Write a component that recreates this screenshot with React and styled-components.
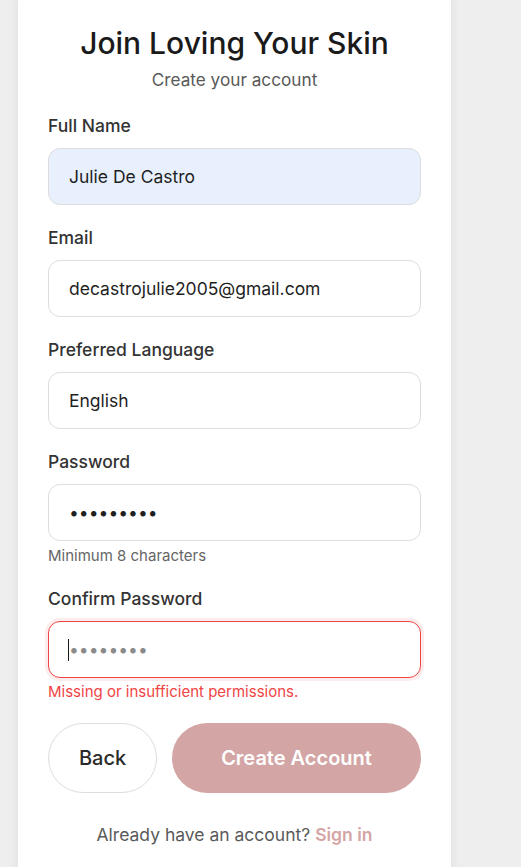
import React from "react";
import styled, { createGlobalStyle } from "styled-components";

const GlobalStyle = createGlobalStyle`
  html, body {
    margin: 0;
    padding: 0;
    background: #eeeeee;
    font-family: Inter, "Noto Sans", sans-serif;
    overflow: hidden;
  }
`;

const Page = styled.div`
  width: 521px;
  height: 867px;
  overflow: hidden;
`;

const Card = styled.div`
  box-sizing: border-box;
  width: 435px;
  margin: -15px 0 0 17px;
  padding: 39px 30px 40px;
  background: #ffffff;
  border-radius: 16px;
  border: 1px solid #e6e6e6;
  box-shadow: 0 2px 10px rgba(0, 0, 0, 0.06);
`;

const Title = styled.h1`
  margin: 0;
  font-size: 30px;
  line-height: 36px;
  font-weight: 500;
  color: #1a1a1a;
  text-align: center;
`;

const Subtitle = styled.p`
  margin: 7px 0 22px;
  font-size: 17.2px;
  line-height: 24px;
  color: #595959;
  text-align: center;
`;

const Form = styled.form`
  display: flex;
  flex-direction: column;
  gap: 21px;
`;

const Field = styled.div`
  display: flex;
  flex-direction: column;
`;

const Label = styled.label`
  font-size: 17.5px;
  line-height: 24px;
  font-weight: 500;
  color: #333333;
  margin-bottom: 10px;
`;

const InputWrap = styled.div`
  position: relative;
`;

const Input = styled.input`
  box-sizing: border-box;
  width: 100%;
  height: 57px;
  padding: 0 20px;
  border-radius: 12px;
  border: 1px solid ${p => (p.$error ? "#ef4444" : "#dddddd")};
  background: ${p => (p.$filled ? "#e8f0fe" : "#ffffff")};
  box-shadow: ${p => (p.$error ? "0 0 0 3px rgba(239, 68, 68, 0.1)" : "none")};
  font-family: Inter, "Noto Sans", sans-serif;
  font-size: 17.5px;
  color: #1f1f1f;
  outline: none;

  &::placeholder {
    color: #8a8a8a;
  }
`;

const Caret = styled.span`
  position: absolute;
  left: 20px;
  top: 18px;
  width: 1px;
  height: 22px;
  background: #1a1a1a;
`;

const Hint = styled.span`
  margin-top: ${p => (p.$error ? "4px" : "5px")};
  font-size: 15px;
  line-height: 20px;
  color: ${p => (p.$error ? "#ef4444" : "#666666")};
`;

const Actions = styled.div`
  display: flex;
  gap: 15px;
`;

const Button = styled.button`
  height: 70px;
  border-radius: 35px;
  font-family: Inter, "Noto Sans", sans-serif;
  font-size: 20px;
  cursor: pointer;
`;

const BackButton = styled(Button)`
  width: 109px;
  background: #ffffff;
  border: 1px solid #dddddd;
  color: #2a2a2a;
  font-weight: 500;
`;

const SubmitButton = styled(Button)`
  flex: 1;
  background: #d4a5a5;
  border: none;
  color: #ffffff;
  font-weight: 600;
`;

const Footer = styled.p`
  margin: 30px 0 0;
  text-align: center;
  font-size: 17.5px;
  line-height: 24px;
  color: #5a5a5a;
`;

const SignIn = styled.a`
  color: #d4a5a5;
  font-weight: 600;
  text-decoration: none;
`;

export default function App() {
  return (
    <>
      <GlobalStyle />
      <Page>
        <Card>
          <Title>Join Loving Your Skin</Title>
          <Subtitle>Create your account</Subtitle>
          <Form onSubmit={e => e.preventDefault()}>
            <Field>
              <Label>Full Name</Label>
              <Input $filled defaultValue="Julie De Castro" />
            </Field>
            <Field>
              <Label>Email</Label>
              <Input type="email" defaultValue="decastrojulie2005@gmail.com" />
            </Field>
            <Field>
              <Label>Preferred Language</Label>
              <Input defaultValue="English" />
            </Field>
            <Field>
              <Label>Password</Label>
              <Input type="password" defaultValue="123456789" />
              <Hint>Minimum 8 characters</Hint>
            </Field>
            <Field>
              <Label>Confirm Password</Label>
              <InputWrap>
                <Input $error type="password" placeholder="••••••••" />
                <Caret />
              </InputWrap>
              <Hint $error>Missing or insufficient permissions.</Hint>
            </Field>
            <Actions>
              <BackButton type="button">Back</BackButton>
              <SubmitButton type="submit">Create Account</SubmitButton>
            </Actions>
          </Form>
          <Footer>
            Already have an account? <SignIn href="#">Sign in</SignIn>
          </Footer>
        </Card>
      </Page>
    </>
  );
}
